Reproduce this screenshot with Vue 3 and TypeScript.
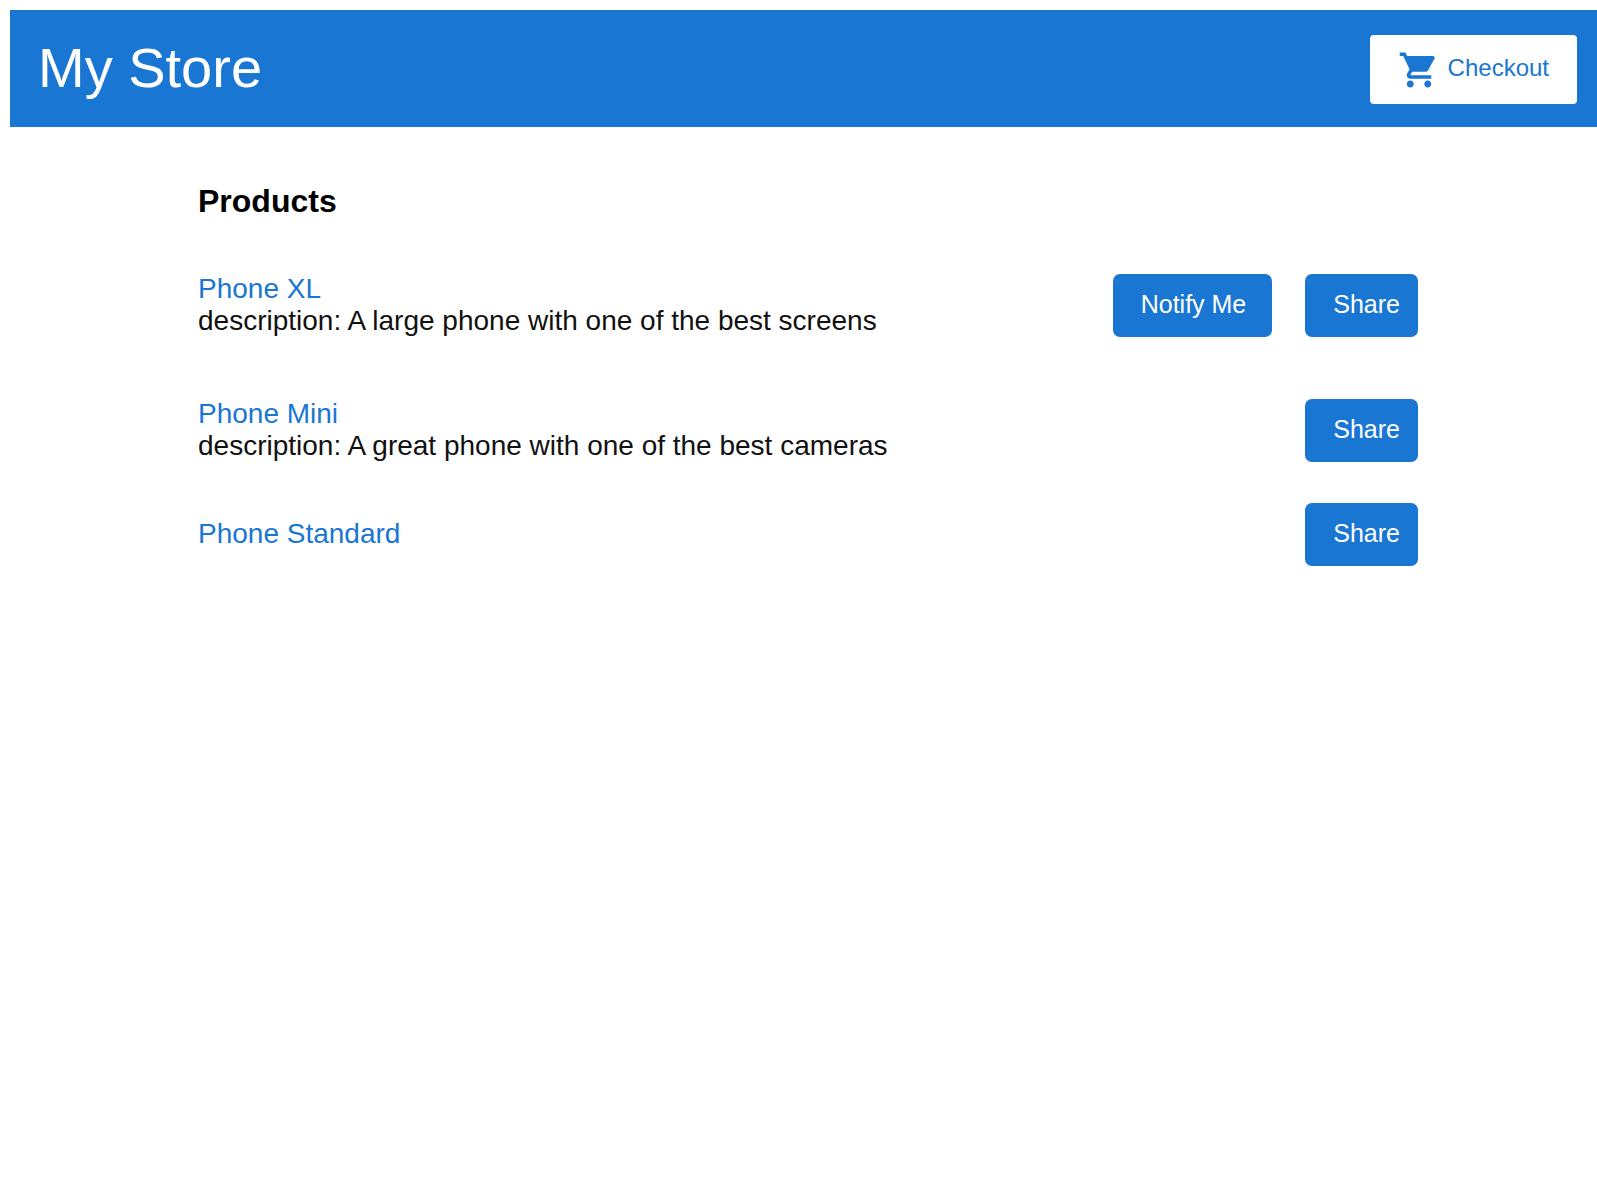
<script setup lang="ts">
interface Product {
  id: number
  name: string
  description?: string
  notify?: boolean
}

const products: Product[] = [
  { id: 1, name: 'Phone XL', description: 'A large phone with one of the best screens', notify: true },
  { id: 2, name: 'Phone Mini', description: 'A great phone with one of the best cameras' },
  { id: 3, name: 'Phone Standard' },
]
</script>

<template>
  <div class="app">
    <header class="top-bar">
      <a class="brand" href="#"><h1>My Store</h1></a>
      <a class="checkout" href="#cart">
        <svg class="cart" viewBox="0 0 24 24" aria-hidden="true">
          <path
            d="M7 18c-1.100 0-1.990.9-1.990 2S5.900 22 7 22s2-.9 2-2-.9-2-2-2zM1 2v2h2l3.600 7.590-1.350 2.450c-.16.28-.25.61-.25.96 0 1.100.9 2 2 2h12v-2H7.420c-.14 0-.25-.11-.25-.25l.03-.12.9-1.630h7.450c.75 0 1.410-.41 1.750-1.030l3.580-6.490c.08-.14.12-.31.12-.48 0-.55-.45-1-1-1H5.210l-.94-2H1zm16 16c-1.100 0-1.990.9-1.990 2s.89 2 1.990 2 2-.9 2-2-.9-2-2-2z"
          />
        </svg>
        <span>Checkout</span>
      </a>
    </header>

    <main class="content">
      <h2>Products</h2>
      <ul class="products">
        <li
          v-for="product in products"
          :key="product.id"
          class="product"
          :class="{ described: product.description }"
        >
          <div class="info">
            <a class="name" href="#product">{{ product.name }}</a>
            <p v-if="product.description">description: {{ product.description }}</p>
          </div>
          <div class="actions">
            <button v-if="product.notify" type="button" class="notify">Notify Me</button>
            <button type="button">Share</button>
          </div>
        </li>
      </ul>
    </main>
  </div>
</template>

<style>
body {
  background: #fff;
}
</style>

<style scoped>
.app {
  padding: 10px 0 0 10px;
  font-family: "Liberation Sans", Arial, Helvetica, sans-serif;
  font-size: 28px;
  line-height: 32px;
  color: #111;
}

.top-bar {
  display: flex;
  align-items: center;
  justify-content: space-between;
  box-sizing: border-box;
  height: 117px;
  padding: 2px 20px 0 28px;
  background: #1976d2;
}

a {
  color: #1976d2;
  text-decoration: none;
}

.brand {
  padding-bottom: 4px;
  color: #fff;
}

h1 {
  margin: 0;
  font-size: 56px;
  font-weight: 400;
  line-height: 64px;
}

.checkout {
  display: flex;
  align-items: center;
  gap: 8px;
  height: 69px;
  padding: 0 28px;
  border-radius: 4px;
  background: #fff;
  font-size: 24px;
}

.checkout span {
  padding-bottom: 4px;
}

.cart {
  width: 42px;
  height: 42px;
  fill: #1976d2;
}

.content {
  padding: 56px 179px 0 188px;
}

h2 {
  margin: 0 0 23px;
  font-size: 32px;
  line-height: 36px;
  color: #000;
}

.products {
  margin: 0;
  padding: 0;
  list-style: none;
}

.product {
  display: flex;
  align-items: center;
  justify-content: space-between;
  padding: 9px 0;
}

.product.described {
  padding: 30px 0;
}

.info p {
  margin: 0;
}

.name {
  display: block;
}

.actions {
  display: flex;
  gap: 33px;
  padding-top: 2px;
}

button {
  height: 63px;
  padding: 0 18px 3px 28px;
  border: 0;
  border-radius: 7px;
  background: #1976d2;
  color: #fff;
  font-family: inherit;
  font-size: 25px;
  line-height: 32px;
}

button.notify {
  padding-right: 26px;
}
</style>
